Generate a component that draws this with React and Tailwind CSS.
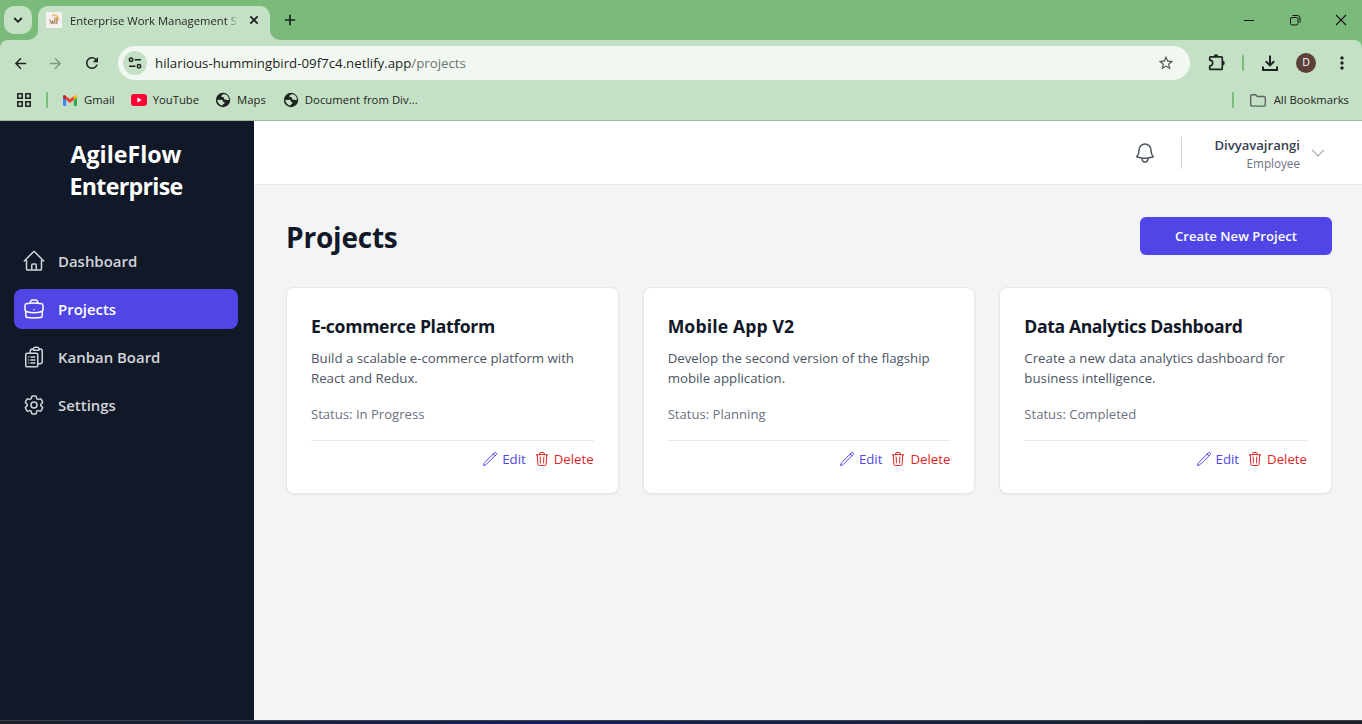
import React from "react";
import {
  HiOutlineHome,
  HiOutlineBriefcase,
  HiOutlineClipboardDocumentList,
  HiOutlineCog6Tooth,
  HiOutlineBell,
  HiOutlineChevronDown,
  HiOutlinePencil,
  HiOutlineTrash,
} from "react-icons/hi2";
import {
  MdArrowBack,
  MdArrowForward,
  MdRefresh,
  MdStarBorder,
  MdMoreVert,
} from "react-icons/md";

function TabStrip() {
  return (
    <div className="flex h-10 bg-[#7abb7c]">
      <div className="mt-1.5 ml-1 flex size-7 items-center justify-center rounded-[10px] bg-[#c5e1c5]">
        <svg className="size-3" viewBox="0 0 12 12" fill="none" stroke="#1f2020" strokeWidth="1.8">
          <path d="M2.2 4 6 7.8 9.8 4" />
        </svg>
      </div>
      <div className="relative mt-1.5 ml-1.5 flex h-[34px] w-[232px] rounded-t-[10px] bg-[#c5e1c5]">
        <svg className="absolute bottom-0 -left-2.5 size-2.5" viewBox="0 0 10 10">
          <path d="M10 0v10H0A10 10 0 0 0 10 0Z" fill="#c5e1c5" />
        </svg>
        <svg className="absolute -right-2.5 bottom-0 size-2.5" viewBox="0 0 10 10">
          <path d="M0 0v10h10A10 10 0 0 1 0 0Z" fill="#c5e1c5" />
        </svg>
        <svg className="mt-1.5 ml-2 size-4" viewBox="0 0 16 16">
          <rect width="16" height="16" fill="#f4f2ee" />
          <path d="M6 3.800C9 1.800 12.500 4 12.600 8.500" fill="none" stroke="#e8bd62" strokeWidth="1.5" />
          <path d="M3.500 7.500 5.400 11.500 7 8.500v3.500M8.800 6.500v5.500M10.800 6.500v5.500" fill="none" stroke="#ab8061" strokeWidth="1.200" />
          <path d="M8 6h3.500v2" fill="none" stroke="#d59b48" />
        </svg>
        <div className="mt-[7px] ml-2 h-4 w-[168px] bg-linear-to-r from-[#1f2020] from-93% to-transparent bg-clip-text text-[11.3px]/4 whitespace-nowrap text-transparent">
          Enterprise Work Management S
        </div>
        <svg className="mt-2 ml-2.5 size-3 shrink-0" viewBox="0 0 12 12" stroke="#1f2020" strokeWidth="1.7">
          <path d="m2.300 2.300 7.400 7.400M9.700 2.300 2.300 9.700" />
        </svg>
      </div>
      <svg className="mt-3.5 ml-3.5 size-3" viewBox="0 0 12 12" stroke="#1f2020" strokeWidth="1.7">
        <path d="M6 .8v10.400M.8 6h10.400" />
      </svg>
      <div className="mt-3.5 mr-[15px] ml-auto flex gap-[34px]">
        <svg className="size-3" viewBox="0 0 12 12" stroke="#111">
          <path d="M1 6.500h10" />
        </svg>
        <svg className="size-3" viewBox="0 0 12 12" fill="none" stroke="#111">
          <rect x="1.500" y="3.500" width="7.500" height="7.500" rx="1.500" />
          <path d="M3.500 1.500h5a2.500 2.500 0 0 1 2.500 2.500v4.500" />
        </svg>
        <svg className="size-3" viewBox="0 0 12 12" stroke="#111" strokeWidth="1.100">
          <path d="m1 1 10 10M11 1 1 11" />
        </svg>
      </div>
    </div>
  );
}

function Toolbar() {
  return (
    <div className="flex h-[46px] items-center rounded-t-lg bg-[#c5e1c5] pl-3 text-[#1f2422]">
      <MdArrowBack className="size-[17px]" />
      <MdArrowForward className="ml-[18px] size-[17px] text-[#7f9883]" />
      <MdRefresh className="ml-[19px] size-[18px]" />
      <div className="ml-[17px] flex h-[34px] w-[1072px] items-center rounded-full bg-[#f1f8f1] pr-4 pl-[5px]">
        <div className="flex size-6 items-center justify-center rounded-full bg-[#c5e1c5]">
          <svg className="size-3.5" viewBox="0 0 14 14" fill="none" stroke="#1f2422" strokeWidth="1.500">
            <circle cx="3" cy="3.700" r="1.700" />
            <circle cx="11" cy="10.300" r="1.700" />
            <path d="M6.500 3.700H13M1 10.300h6.500" />
          </svg>
        </div>
        <div className="ml-2 text-[13.270px]/5 text-[#1f2422]">
          hilarious-hummingbird-09f7c4.netlify.app<span className="text-[#6b756d]">/projects</span>
        </div>
        <MdStarBorder className="ml-auto size-4 scale-110 text-[#4f5551]" />
      </div>
      <svg className="ml-[18px] size-[18px]" viewBox="0 0 18 18">
        <path
          d="M1.700 6.100V3.800q0-1 1-1h10.600q1 0 1 1v10.600q0 1-1 1H2.700q-1 0-1-1v-2.300a3 3 0 0 0 0-6Z"
          fill="none"
          stroke="currentColor"
          strokeWidth="1.700"
          strokeLinejoin="round"
        />
        <path d="M5.700 2.500a2.300 2.300 0 0 1 4.600 0ZM14.500 6.800a2.300 2.300 0 0 1 0 4.600Z" fill="currentColor" />
      </svg>
      <div className="ml-4 h-4 w-0.5 rounded bg-[#7abb7c]" />
      <svg className="ml-[18px] size-4" viewBox="0 0 16 16" fill="none" stroke="currentColor" strokeWidth="2">
        <path d="M8 .5v9.500M3.800 6.200 8 10.400l4.200-4.200M1 11.500V15h14v-3.500" />
      </svg>
      <div className="ml-[18px] flex size-5 items-center justify-center rounded-full bg-[#5d4037] text-[10.500px] font-medium text-white">
        D
      </div>
      <MdMoreVert className="ml-4 size-5" />
    </div>
  );
}

function GlobeIcon() {
  return (
    <svg className="size-4" viewBox="0 0 16 16">
      <circle cx="8" cy="8" r="7.200" fill="#1f2422" />
      <path
        d="M8.200 2.300 6.700 3.400q-1 .9.200 1.500l1.500.3q.9.300.6 1.300-.2.900.9 1.100l1.400.1q1.200.4 2.700 0Q13.800 4.600 12 3.200q-1.700-1.200-3.800-.9Z"
        fill="#c5e1c5"
      />
      <path
        d="M2.200 7.800q2 .2 3.700 0 1.900 0 2 1.400.2 1 1.300 1.100.6.500.2 1.200l-1.300.7q-.4.600-.6 1.400Q3 12.900 2.200 7.800Z"
        fill="#c5e1c5"
      />
    </svg>
  );
}

function Bookmark({ icon, children, className }) {
  return (
    <div className={"flex items-center text-[11.300px]/4 whitespace-nowrap " + className}>
      {icon}
      {children}
    </div>
  );
}

function BookmarksBar() {
  return (
    <div className="flex h-[35px] items-center border-b border-[#9db49d] bg-[#c5e1c5] pr-[13px] pb-1.5 pl-[17px] text-[#1f2422]">
      <svg className="size-3.5" viewBox="0 0 14 14" fill="none" stroke="currentColor" strokeWidth="1.600">
        <path d="M.8.8h4.400v4.400H.8zM8.800.8h4.400v4.400H8.800zM.8 8.800h4.400v4.400H.8zM8.800 8.800h4.400v4.400H8.800z" />
      </svg>
      <div className="ml-[15px] h-4 w-0.5 rounded bg-[#7abb7c]" />
      <Bookmark
        className="ml-[15px] gap-[7px]"
        icon={
          <svg className="h-[11px] w-3.5" viewBox="0 0 14 11">
            <path d="M0 2v8q0 1 1 1h2.200V4.500Z" fill="#4285f4" />
            <path d="M14 2v8q0 1-1 1h-2.200V4.500Z" fill="#34a853" />
            <path d="M10.800 1.200 12 .3q2-.9 2 1.500v.9l-3.200 2.400Z" fill="#fbbc04" />
            <path d="M3.200 1.200 7 4l3.800-2.800v3.900L7 7.900 3.200 5.100Z" fill="#ea4335" />
            <path d="M0 2.700v-.9Q0-.6 2 .3l1.200.9v3.900Z" fill="#c5221f" />
          </svg>
        }
      >
        Gmail
      </Bookmark>
      <Bookmark
        className="ml-4 gap-1.5"
        icon={
          <svg className="h-3 w-4" viewBox="0 0 16 12">
            <rect width="16" height="12" rx="3" fill="#ff0033" />
            <path d="m6.300 3.400 4.500 2.600-4.500 2.600Z" fill="#fff" />
          </svg>
        }
      >
        YouTube
      </Bookmark>
      <Bookmark className="ml-4 gap-1.5" icon={<GlobeIcon />}>
        Maps
      </Bookmark>
      <Bookmark className="ml-[17px] gap-1.5 tracking-[0.030px]" icon={<GlobeIcon />}>
        Document from Div...
      </Bookmark>
      <div className="ml-auto h-4 w-0.5 rounded bg-[#7abb7c]" />
      <Bookmark
        className="ml-4 gap-2"
        icon={
          <svg className="h-[13px] w-4" viewBox="0 0 16 13" fill="none" stroke="#5b655e" strokeWidth="1.400">
            <path d="M.7 10.800V2q0-1.300 1.300-1.300h3.500l1.800 1.800H14q1.300 0 1.300 1.300v7q0 1.300-1.300 1.300H2Q.7 12.100.7 10.800Z" />
          </svg>
        }
      >
        All Bookmarks
      </Bookmark>
    </div>
  );
}

const NAV = [
  { label: "Dashboard", Icon: HiOutlineHome },
  { label: "Projects", Icon: HiOutlineBriefcase, active: true },
  { label: "Kanban Board", Icon: HiOutlineClipboardDocumentList },
  { label: "Settings", Icon: HiOutlineCog6Tooth },
];

function Sidebar() {
  return (
    <aside className="w-[254px] shrink-0 bg-[#111827] pt-[17px] pr-4 pl-3.5">
      <div className="text-center font-bold text-white">
        <div className="text-[23.200px]/8">AgileFlow</div>
        <div className="text-[23.200px]/8 tracking-[-0.700px]">Enterprise</div>
      </div>
      <nav className="mt-[39px] flex flex-col gap-2">
        {NAV.map(({ label, Icon, active }) => (
          <a
            key={label}
            className={
              "flex h-10 items-center gap-3 rounded-lg px-2 text-[14.950px] font-semibold " +
              (active ? "bg-[#4f46e5] text-white" : "text-[#d1d5db]")
            }
          >
            <Icon className="size-6" />
            {label}
          </a>
        ))}
      </nav>
    </aside>
  );
}

function Header() {
  return (
    <header className="flex h-16 shrink-0 items-center border-b border-[#e5e7eb] bg-white pr-[35px]">
      <HiOutlineBell className="ml-auto size-6 text-[#4b5563]" />
      <div className="ml-6 h-8 w-px bg-[#d1d5db]" />
      <div className="ml-8 w-[86px] text-right">
        <div className="text-[13.100px]/5 font-semibold text-[#374151]">Divyavajrangi</div>
        <div className="text-[11.700px]/4 font-medium text-[#6b7280]">Employee</div>
      </div>
      <HiOutlineChevronDown className="ml-[9px] size-[18px] text-[#9ca3af]" />
    </header>
  );
}

const PROJECTS = [
  {
    title: "E-commerce Platform",
    titleClass: "tracking-[-0.320px]",
    text: "Build a scalable e-commerce platform with React and Redux.",
    status: "In Progress",
  },
  {
    title: "Mobile App V2",
    titleClass: "tracking-[0.130px]",
    text: "Develop the second version of the flagship mobile application.",
    status: "Planning",
  },
  {
    title: "Data Analytics Dashboard",
    titleClass: "tracking-[-0.380px]",
    text: "Create a new data analytics dashboard for business intelligence.",
    status: "Completed",
  },
];

function ProjectCard({ title, titleClass, text, status }) {
  return (
    <article className="h-[207px] rounded-lg border border-[#e5e7eb] bg-white p-6 shadow-[0_1px_2px_0_rgb(0_0_0/0.05)]">
      <h2 className={"text-[17.600px]/7 font-bold text-[#111827] " + titleClass}>{title}</h2>
      <p className="mt-2 text-[13.260px]/5 text-[#4b5563]">{text}</p>
      <p className="mt-4 text-[13.100px]/5 text-[#6b7280]">Status: {status}</p>
      <div className="mt-4 flex justify-end gap-2 border-t border-[#e5e7eb] pt-2 text-[13.230px]/5">
        <button className="flex items-center gap-1 text-[#4f46e5]">
          <HiOutlinePencil className="size-4" />
          Edit
        </button>
        <button className="flex items-center gap-1 text-[#dc2626]">
          <HiOutlineTrash className="size-4" />
          Delete
        </button>
      </div>
    </article>
  );
}

export default function App() {
  return (
    <div className="flex h-[724px] w-[1362px] flex-col overflow-hidden bg-[#7abb7c] font-['Open_Sans','Noto_Sans',sans-serif]">
      <TabStrip />
      <Toolbar />
      <BookmarksBar />
      <div className="flex min-h-0 flex-1">
        <Sidebar />
        <div className="flex flex-1 flex-col">
          <Header />
          <main className="flex-1 bg-[#f3f4f6] pt-8 pr-[30px] pl-8">
            <div className="flex items-center justify-between">
              <h1 className="pt-0.5 text-[28px]/9 font-bold tracking-[-0.200px] text-[#111827]">Projects</h1>
              <button className="h-[38px] w-48 rounded-md bg-[#4f46e5] text-[13.130px]/5 font-semibold text-white">
                Create New Project
              </button>
            </div>
            <div className="mt-8 grid grid-cols-3 gap-6">
              {PROJECTS.map((p) => (
                <ProjectCard key={p.title} {...p} />
              ))}
            </div>
          </main>
        </div>
      </div>
      <div className="h-1 shrink-0 border-t border-[#3f4048] bg-linear-to-r from-[#1c202a] via-[#12205a] via-40% to-[#1c2028]" />
    </div>
  );
}
